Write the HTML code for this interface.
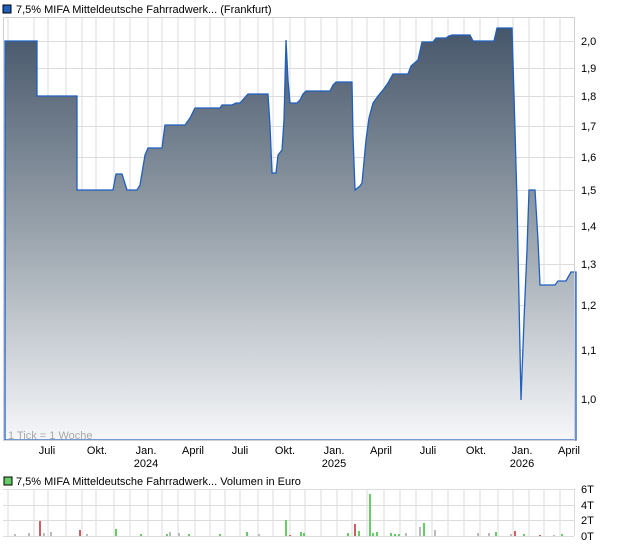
<!DOCTYPE html>
<html><head><meta charset="utf-8"><style>
body{margin:0;background:#fff;width:620px;height:546px;overflow:hidden;font-family:"Liberation Sans",sans-serif;}
</style></head><body>
<svg width="620" height="546" xmlns="http://www.w3.org/2000/svg" font-family="Liberation Sans, sans-serif">
<defs><linearGradient id="g" gradientUnits="userSpaceOnUse" x1="0" y1="28" x2="0" y2="440">
<stop offset="0" stop-color="#46566a"/><stop offset="0.5" stop-color="#9aa4ad"/><stop offset="1" stop-color="#f6f7f9"/></linearGradient></defs>
<rect x="3" y="5" width="8" height="8" fill="#1f5fbf" stroke="#000" stroke-width="1"/>
<text x="16" y="13" font-size="11" fill="#000">7,5% MIFA Mitteldeutsche Fahrradwerk... (Frankfurt)</text>
<g stroke="#dcdcdc" stroke-width="1">
<path d="M8 17V440M34 17V440M48 17V440M66 17V440M82 17V440M96 17V440M114 17V440M130 17V440M148 17V440M162 17V440M178 17V440M195 17V440M210 17V440M225 17V440M240 17V440M258 17V440M273 17V440M290 17V440M305 17V440M321 17V440M337 17V440M352 17V440M367 17V440M384 17V440M400 17V440M416 17V440M432 17V440M448 17V440M464 17V440M480 17V440M498 17V440M513 17V440M529 17V440M544 17V440M560 17V440"/>
<path d="M3 17.5H574M3 41.5H574M3 68.5H574M3 96.5H574M3 126.5H574M3 157.5H574M3 190.5H574M3 226.5H574M3 264.5H574M3 305.5H574M3 350.5H574M3 399.5H574"/>
</g>
<path fill="url(#g)" stroke="#1f5fbf" stroke-width="1.3" d="M5 41H37V96H77V190H113L116 174H122L127 190H137L140 185L145 155L148 148H162L165 125H185L190 118L195 108H220L222 105H232L236 103H240L248 94H268L270 125L272 173H276L278 155L282 150L284 120L286 40L288 80L290 103H297L300 100L303 94L306 91H330L333 85L336 82H352L353 135L355 190L360 186L362 183L366 140L369 118L373 103L378 96L383 90L388 83L393 74H408L411 66L418 60L422 42H433L436 38H446L449 36L452 35H470L473 41H494L497 28H512L514 95L517 200L521 400L524 320L527 250L529 190H535L538 240L540 285H555L558 281H566L571 272H576V440H5Z"/>
<rect x="3.5" y="17.5" width="571" height="423" fill="none" stroke="#d0d0d0"/>
<g font-size="11" fill="#000">
<text x="581" y="45">2,0</text><text x="581" y="72">1,9</text><text x="581" y="100">1,8</text><text x="581" y="130">1,7</text><text x="581" y="161">1,6</text><text x="581" y="194">1,5</text><text x="581" y="230">1,4</text><text x="581" y="268">1,3</text><text x="581" y="309">1,2</text><text x="581" y="354">1,1</text><text x="581" y="403">1,0</text>
</g>
<text x="8" y="439" font-size="11" fill="#a8a8a8">1 Tick = 1 Woche</text>
<g font-size="11" fill="#000" text-anchor="middle">
<text x="47" y="454">Juli</text><text x="97" y="454">Okt.</text><text x="146" y="454">Jan.</text><text x="146" y="467">2024</text><text x="193" y="454">April</text><text x="240" y="454">Juli</text><text x="285" y="454">Okt.</text><text x="334" y="454">Jan.</text><text x="334" y="467">2025</text><text x="381" y="454">April</text><text x="428" y="454">Juli</text><text x="476" y="454">Okt.</text><text x="522" y="454">Jan.</text><text x="522" y="467">2026</text><text x="569" y="454">April</text>
</g>
<rect x="4" y="477" width="8" height="8" fill="#66cc66" stroke="#000"/>
<text x="16" y="485" font-size="11" fill="#000">7,5% MIFA Mitteldeutsche Fahrradwerk... Volumen in Euro</text>
<g stroke="#dcdcdc">
<path d="M8 489V536M34 489V536M48 489V536M66 489V536M82 489V536M96 489V536M114 489V536M130 489V536M148 489V536M162 489V536M178 489V536M195 489V536M210 489V536M225 489V536M240 489V536M258 489V536M273 489V536M290 489V536M305 489V536M321 489V536M337 489V536M352 489V536M367 489V536M384 489V536M400 489V536M416 489V536M432 489V536M448 489V536M464 489V536M480 489V536M498 489V536M513 489V536M529 489V536M544 489V536M560 489V536"/>
<path d="M3 489.5H574M3 505.5H574M3 520.5H574M3 536.5H574M574.5 489V536"/>
</g>
<g>
<rect x="14" y="534" width="2" height="2" fill="#bbb"/><rect x="28" y="533" width="2" height="3" fill="#bbb"/>
<rect x="39" y="521" width="2" height="15" fill="#d06060"/><rect x="43" y="533" width="2" height="3" fill="#bbb"/><rect x="50" y="532" width="2" height="4" fill="#bbb"/>
<rect x="79" y="530" width="2" height="6" fill="#d06060"/><rect x="86" y="534" width="2" height="2" fill="#bbb"/>
<rect x="115" y="529" width="2" height="7" fill="#66cc66"/><rect x="140" y="534" width="2" height="2" fill="#66cc66"/><rect x="166" y="534" width="2" height="2" fill="#66cc66"/><rect x="169" y="532" width="2" height="4" fill="#bbb"/><rect x="178" y="533" width="2" height="3" fill="#bbb"/>
<rect x="188" y="534" width="2" height="2" fill="#66cc66"/><rect x="219" y="534" width="2" height="2" fill="#66cc66"/><rect x="246" y="532" width="2" height="4" fill="#66cc66"/><rect x="258" y="534" width="2" height="2" fill="#bbb"/>
<rect x="285" y="520" width="2" height="16" fill="#66cc66"/><rect x="289" y="535" width="2" height="1" fill="#d06060"/><rect x="300" y="532" width="2" height="4" fill="#66cc66"/><rect x="303" y="533" width="2" height="3" fill="#66cc66"/>
<rect x="347" y="533" width="2" height="3" fill="#66cc66"/><rect x="354" y="524" width="2" height="12" fill="#d06060"/><rect x="358" y="531" width="2" height="5" fill="#66cc66"/><rect x="369" y="494" width="2" height="42" fill="#66cc66"/><rect x="372" y="533" width="2" height="3" fill="#66cc66"/><rect x="376" y="532" width="2" height="4" fill="#66cc66"/>
<rect x="390" y="533" width="2" height="3" fill="#66cc66"/><rect x="394" y="534" width="2" height="2" fill="#66cc66"/><rect x="398" y="534" width="2" height="2" fill="#66cc66"/><rect x="405" y="533" width="2" height="3" fill="#bbb"/><rect x="419" y="527" width="2" height="9" fill="#bbb"/><rect x="423" y="523" width="2" height="13" fill="#66cc66"/><rect x="434" y="530" width="2" height="6" fill="#bbb"/>
<rect x="477" y="533" width="2" height="3" fill="#bbb"/><rect x="488" y="533" width="2" height="3" fill="#bbb"/><rect x="495" y="532" width="2" height="4" fill="#66cc66"/><rect x="510" y="534" width="2" height="2" fill="#bbb"/><rect x="514" y="531" width="2" height="5" fill="#d06060"/><rect x="523" y="534" width="2" height="2" fill="#66cc66"/><rect x="539" y="535" width="2" height="1" fill="#d06060"/><rect x="553" y="535" width="2" height="1" fill="#bbb"/><rect x="561" y="534" width="2" height="2" fill="#66cc66"/>
</g>
<g font-size="11" fill="#000">
<text x="581" y="493">6T</text><text x="581" y="509">4T</text><text x="581" y="524">2T</text><text x="581" y="540">0T</text>
</g>
</svg>
</body></html>
